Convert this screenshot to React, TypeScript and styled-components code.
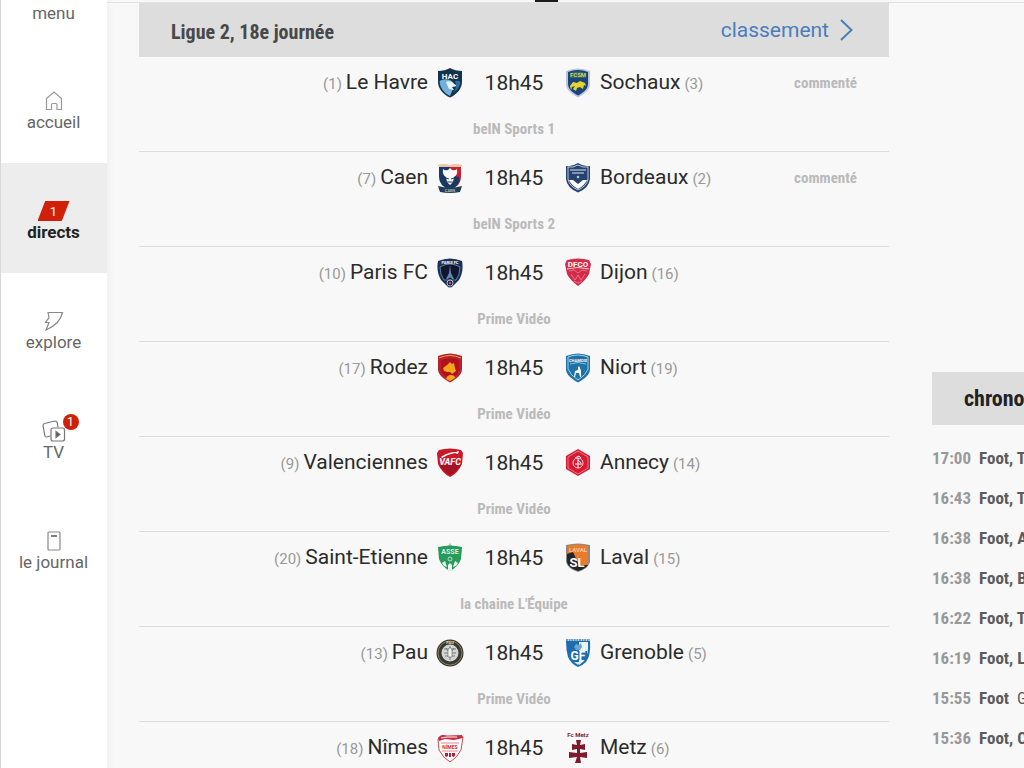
import React from 'react';
import styled, { createGlobalStyle } from 'styled-components';

const wide = `Roboto, 'Liberation Sans', sans-serif`;
const narrow = `'Roboto Condensed', 'Liberation Sans Narrow', 'Open Sans Condensed', Roboto, sans-serif`;

const GlobalStyle = createGlobalStyle`
  * { box-sizing: border-box; }
  body {
    margin: 0;
    background: #f8f8f8;
    color: #2b2b2b;
    font-family: ${wide};
    overflow: hidden;
  }
  a { color: inherit; text-decoration: none; }
  ul { margin: 0; padding: 0; list-style: none; }
  h1, h2, p { margin: 0; }
`;

const Page = styled.div`
  display: grid;
  grid-template-columns: 107px minmax(0, 1fr);
  height: 100vh;
  overflow: hidden;
`;

const Sidebar = styled.nav`
  background: #fff;
  border-left: 1px solid #d8d8d8;
  box-shadow: 0 0 8px #ececec;
`;

const NavLink = styled.a<{ $active?: boolean; $cut?: boolean }>`
  display: flex;
  flex-direction: column;
  align-items: center;
  height: ${(p) => (p.$cut ? 53 : 110)}px;
  padding-top: ${(p) => (p.$cut ? 3 : 37)}px;
  padding-right: 1px;
  background: ${(p) => (p.$active ? '#ededed' : 'transparent')};
  color: ${(p) => (p.$active ? '#222' : '#666')};
  font-size: 17px;
  font-weight: ${(p) => (p.$active ? 700 : 400)};
  line-height: 20px;
`;

const IconBox = styled.span`
  position: relative;
  display: flex;
  align-items: center;
  justify-content: center;
  height: 22px;
`;

const LiveTag = styled.span`
  display: block;
  width: 32px;
  height: 20px;
  background: #d02008;
  clip-path: polygon(24% 0, 100% 0, 76% 100%, 0 100%);
  color: #fff;
  font: 400 13px/22px ${wide};
  text-align: center;
`;

const Badge = styled.span`
  position: absolute;
  top: -6px;
  right: -13px;
  width: 16px;
  height: 16px;
  border-radius: 50%;
  background: #d02008;
  color: #fff;
  font: 400 13px/16px ${wide};
  text-align: center;
`;

const Content = styled.div`
  min-width: 0;
`;

const TopStrip = styled.div`
  height: 3px;
  padding-left: 428px;
  border-bottom: 1px solid #e2e2e2;
`;

const TopMark = styled.div`
  width: 23px;
  height: 2px;
  background: #1b1b1b;
`;

const Columns = styled.div`
  display: grid;
  grid-template-columns: minmax(0, 1fr) 92px;
  gap: 43px;
  padding-left: 32px;
`;

const SectionHeader = styled.header`
  display: flex;
  align-items: center;
  justify-content: space-between;
  height: 54px;
  padding: 0 36px 0 32px;
  background: #ddd;
`;

const SectionTitle = styled.h1`
  padding-top: 3px;
  color: #484848;
  font: 700 20px/28px ${narrow};
`;

const RankingLink = styled.a`
  display: flex;
  align-items: center;
  gap: 11px;
  color: #4a7ebb;
  font-size: 21px;
  line-height: 28px;
`;

const MatchRow = styled.li`
  height: 95px;
  padding-top: 10px;
  border-bottom: 1px solid #ddd;
`;

const MatchLine = styled.a`
  display: grid;
  grid-template-columns: minmax(0, 1fr) 172px minmax(0, 1fr);
  align-items: center;
  height: 30px;
`;

const Team = styled.span`
  display: flex;
  align-items: baseline;
  gap: 4px;
  font-size: 21px;
  line-height: 30px;
  white-space: nowrap;
`;

const HomeTeam = styled(Team)`
  justify-content: flex-end;
`;

const Rank = styled.span`
  color: #999;
  font-size: 15px;
`;

const Away = styled.span`
  display: flex;
  align-items: center;
  justify-content: space-between;
  padding-right: 32px;
`;

const Note = styled.span`
  color: #bababa;
  font: 700 15px/20px ${narrow};
`;

const Kickoff = styled.span`
  display: flex;
  align-items: center;
  justify-content: space-between;
  padding: 0 8px;
  font-size: 21px;
`;

const Channel = styled.p`
  margin-top: 22px;
  color: #bababa;
  font: 700 15px/20px ${narrow};
  text-align: center;
`;

const Chrono = styled.aside`
  min-width: 0;
  margin-top: 369px;
  overflow: hidden;
  white-space: nowrap;
`;

const ChronoTitle = styled.h2`
  padding-left: 32px;
  background: #ddd;
  color: #222;
  font: 700 22px/53px ${narrow};
`;

const ChronoList = styled.ul`
  padding-top: 13px;
`;

const ChronoLink = styled.a`
  display: flex;
  gap: 8px;
  color: #5c5c5c;
  font: 700 17px/40px ${narrow};
`;

const ChronoTime = styled.time`
  flex: 0 0 39px;
  color: #999;
`;

const Plain = styled.span`
  font-weight: 400;
`;

const CrestSvg = styled.svg`
  display: block;
  width: 28px;
  height: 30px;
  font-family: ${wide};
  font-weight: 700;
`;

const SHIELD = 'M14 0C17 2 22 3 26 3V14C26 21 20 27 14 29.500C8 27 2 21 2 14V3C6 3 11 2 14 0Z';
const ROUND = 'M2 3Q14 -2 26 3V16C26 22 20 26 14 29.500C8 26 2 22 2 16Z';

const crests: Record<string, React.ReactNode> = {
  'Le Havre': (
    <>
      <path d={SHIELD} fill="#123451" />
      <path d="M3.500 13Q8 10 14 12Q18 14 19 17L14 18L17 21L14 28C8 25 4 20 3.500 13Z" fill="#74b0d8" />
      <path d="M10 14Q15 12 18 16L22 18L16 19L18 22L13 21Z" fill="#eaf5fb" />
      <path d="M19 13Q23 12 24.500 14Q24 20 17 25Q22 19 19 13Z" fill="#2e6f9f" />
      <text x="14" y="10.500" fontSize="8" textAnchor="middle" fill="#fff">HAC</text>
    </>
  ),
  Sochaux: (
    <>
      <path d={ROUND} fill="#b9c4e4" />
      <path d="M4 4Q14 0 24 4V16C24 21 19 25 14 27.500C9 25 4 21 4 16Z" fill="#1c4478" />
      <path d="M6 5Q14 2 22 5V10H6Z" fill="#276b77" />
      <text x="14" y="9" fontSize="6" textAnchor="middle" fill="#d8d040">FCSM</text>
      <path d="M6 18L9 14L13 15L16 13L21 15L22 18L20 17L19 21L16 19L13 20L12 23L9 21L11 18L8 19L7 22Z" fill="#e4d62c" />
    </>
  ),
  Caen: (
    <>
      <path d="M2 2Q8 0 14 2Q20 0 26 2L25 5H3Z" fill="#e8c7a8" />
      <path d="M3 4H14V27Q3 23 3 14Z" fill="#193862" />
      <path d="M14 4H25V14Q25 23 14 27Z" fill="#c9202d" />
      <path d="M4 15Q14 9 24 15Q23 24 14 26Q5 24 4 15Z" fill="#193862" />
      <path d="M7 6Q9 8 12 7L14 5L16 7Q19 8 21 6Q22 12 18 14L17 19L14 22L11 19L10 14Q6 12 7 6Z" fill="#fff" />
      <path d="M10 15L13 16M18 15L15 16M11 19H17" stroke="#193862" />
      <path d="M2 23Q14 26 26 23L24 29Q14 31 4 29Z" fill="#263c55" />
      <text x="14" y="29" fontSize="4" textAnchor="middle" fill="#bbb">CAEN</text>
    </>
  ),
  Bordeaux: (
    <>
      <path d="M2 3Q8 4 14 0Q20 4 26 3V16Q25 25 14 29.500Q3 25 2 16Z" fill="#27426e" />
      <path d="M4 4Q9 5 14 2Q19 5 24 4V16Q23 23 14 27Q5 23 4 16Z" fill="none" stroke="#b9c7dc" />
      <path d="M6 7H22M8 10H20" stroke="#9fb1ca" strokeWidth="1.500" />
      <circle cx="14" cy="14" r="1.300" fill="#b9c7dc" />
      <path d="M5 17L9 17L14 21L19 17L23 17Q21 22 14 26Q7 22 5 17Z" fill="#fff" />
    </>
  ),
  'Paris FC': (
    <>
      <path d="M2 3Q14 -2 26 3Q28 13 23 22L17 28Q14 31 11 28L5 22Q0 13 2 3Z" fill="#1a3158" />
      <path d="M4 9Q14 3 24 9Q24 17 20 22H8Q4 17 4 9Z" fill="#11162f" stroke="#7798bd" strokeWidth=".8" />
      <text x="14" y="6" fontSize="4" textAnchor="middle" fill="#fff">PARIS FC</text>
      <path d="M14 7L15 15L18 21H16Q14 18 12 21H10L13 15Z" fill="#6387ad" />
      <circle cx="14" cy="25" r="3" fill="#14254a" stroke="#d7dfe9" strokeWidth=".8" />
      <path d="M13 24H15V26H13Z" fill="#df4a50" />
    </>
  ),
  Dijon: (
    <>
      <path d="M3 2Q14 -1 25 2L27 6L25 16Q22 22 14 28Q6 22 3 16L1 6Z" fill="#d42b49" />
      <text x="14" y="9" fontSize="8" textAnchor="middle" fill="#fff">DFCO</text>
      <path d="M3 11Q14 8 25 11" fill="none" stroke="#f2c9d1" />
      <path d="M5 13L10 12L14 15L18 12L23 13M7 16L11 22L14 17L17 22L21 16M10 23L14 25L18 23" fill="none" stroke="#e98598" strokeWidth=".8" />
    </>
  ),
  Rodez: (
    <>
      <path d={ROUND} fill="#b6222b" />
      <path d="M3 5Q14 0 25 5" fill="none" stroke="#e4a64a" strokeWidth="1" />
      <path d="M5 7Q14 4 23 7V17Q20 23 14 27Q8 23 5 17Z" fill="#b30f1e" />
      <path d="M7 15L11 12L14 9L16 11L18 10L19 15L20 18L16 21L14 19L11 19L8 18ZM10 26Q11 22 15 22Q19 22 19 25L14 28Z" fill="#f5a51b" />
    </>
  ),
  Niort: (
    <>
      <path d={ROUND} fill="#1d72a8" />
      <path d="M4 4Q14 0 24 4V16Q22 22 14 27Q6 22 4 16Z" fill="none" stroke="#a5cfe6" />
      <text x="14" y="9" fontSize="4" textAnchor="middle" fill="#fff">CHAMOIS</text>
      <path d="M6 11Q14 8 22 11" fill="none" stroke="#8bbdde" />
      <path d="M15 13L16 15L17 18L17 24H16L15 20H12L11 24H10L11 18L14 17L14 14Z" fill="#fff" />
    </>
  ),
  Valenciennes: (
    <>
      <path d="M3 2Q14 -1 25 2L27 5L26 16Q22 25 14 29Q6 25 2 16L1 5Z" fill="#ca1828" />
      <path d="M5 9Q12 4 20 4L23 3L22 6L19 5Q12 6 6 10Z" fill="#fff" />
      <path d="M3 17Q14 14 25 17Q21 24 14 27Q7 23 3 17Z" fill="#a51322" />
      <text x="14" y="17" fontSize="9" fontStyle="italic" textAnchor="middle" fill="#fff">VAFC</text>
    </>
  ),
  Annecy: (
    <>
      <path d="M14 1L26 8V21L14 28L2 21V8Z" fill="#d71931" />
      <path d="M14 3L24 9V20L14 26L4 20V9Z" fill="none" stroke="#f0919d" strokeWidth=".8" />
      <circle cx="14" cy="15" r="5" fill="none" stroke="#f8ccd1" />
      <path d="M11 10L15 8L17 10M14 10V20M11 16H18M14 12L17 15" fill="none" stroke="#fff" />
    </>
  ),
  'Saint-Etienne': (
    <>
      <path d="M14 0L17 4H11Z" fill="#b8c5bd" />
      <path d="M2 4Q14 1 26 4L25 16Q22 24 14 28Q6 24 3 16Z" fill="#279b5c" />
      <text x="14" y="11" fontSize="7" textAnchor="middle" fill="#d9efe1">ASSE</text>
      <circle cx="14" cy="16" r="2" fill="none" stroke="#b9e0c9" />
      <path d="M6 20L9 18L11 24L8 23ZM12 22L14 20L16 22V27L14 28L12 27ZM19 18L22 20L20 23L17 24Z" fill="#e8f4ec" />
    </>
  ),
  Laval: (
    <>
      <path d="M2 2Q14 -1 26 2V19Q24 26 14 29Q4 26 2 19Z" fill="#8f8a86" />
      <path d="M4 3Q14 0 24 3V19Q22 24 14 27Q6 24 4 19Z" fill="#eb7b2c" />
      <path d="M3 11L9 9L14 20V28Q4 25 3 19Z" fill="#242424" />
      <path d="M14 22H24Q21 26 14 28Z" fill="#242424" />
      <text x="14" y="9" fontSize="6" textAnchor="middle" fill="#f9c9a5">LAVAL</text>
      <text x="13" y="24" fontSize="13" textAnchor="middle" fill="#fff">SL</text>
    </>
  ),
  Pau: (
    <>
      <circle cx="14" cy="15" r="13.500" fill="#393a32" />
      <circle cx="14" cy="15" r="12" fill="none" stroke="#8a8158" strokeWidth="1" />
      <circle cx="14" cy="15" r="8.500" fill="#d5d6d4" />
      <text x="14" y="6" fontSize="4" textAnchor="middle" fill="#e5dfb9">PAU</text>
      <path d="M8 11H20M9 18H19M14 8V22M10 10Q14 18 18 10M8 15H20" fill="none" stroke="#777a78" />
      <path d="M12 12L14 9L16 12V19H12Z" fill="#f1f1f0" stroke="#676967" strokeWidth=".6" />
    </>
  ),
  Grenoble: (
    <>
      <path d="M2 3H26Q27 18 22 24Q18 28 14 29Q7 26 4 19Q2 12 2 3Z" fill="#1d6cae" />
      <path d="M14 4H24Q25 16 20 23L15 27V4Z" fill="#edf4f9" />
      <path d="M10 9L12 6L15 7L17 5L18 9L16 12L12 12Z" fill="#6ba6d0" />
      <path d="M2 2H26" stroke="#3f78a5" strokeWidth="1.500" strokeDasharray="2 .6" />
      <path d="M14 13H23V22H14Z" fill="#1d6cae" />
      <text x="14" y="22" fontSize="12" textAnchor="middle" fill="#fff">GF</text>
      <path d="M10 24H17L14 27Z" fill="#d9e9f4" />
    </>
  ),
  'Nîmes': (
    <>
      <path d="M2 6L5 3H23L27 4L25 17Q21 25 14 29Q7 25 3 17Z" fill="#fff" stroke="#c94a56" />
      <path d="M2 5Q5 0 11 3L26 2L27 5L18 7L9 6L3 8Z" fill="#c82d3d" />
      <path d="M5 5L11 4L21 4" fill="none" stroke="#fff" />
      <path d="M5 10H23M6 18H22" stroke="#d46b76" strokeWidth=".8" />
      <text x="14" y="16" fontSize="5" textAnchor="middle" fill="#c82d3d">NÎMES</text>
      <path d="M9 20H12V23L10.500 24L9 23ZM13 20H15V24H13ZM16 20H19V23L17.500 24L16 23Z" fill="#b71d34" />
    </>
  ),
  Metz: (
    <>
      <text x="14" y="4" fontSize="6" textAnchor="middle" fill="#7d2430">Fc Metz</text>
      <path d="M12 7H17L16 12L21 11V17L16 16V20L23 19V25L16 24L17 30H11L13 24L5 25V19L13 20V16L8 17V11L13 12Z" fill="#7c1b2a" />
    </>
  ),
};

const Crest = ({ team }: { team: string }) => (
  <CrestSvg viewBox="0 0 28 30" aria-hidden="true">{crests[team]}</CrestSvg>
);

const HomeIcon = () => (
  <svg width="18" height="20" viewBox="0 0 18 20" fill="none" stroke="#999" strokeWidth="1.200">
    <path d="M1.500 7.500L9 1L16.500 7.500V18.500H12V13.500Q12 12.500 11 12.500H7.500Q6.500 12.500 6.500 13.500V18.500H1.500Z" />
  </svg>
);

const ExploreIcon = () => (
  <svg width="20" height="20" viewBox="0 0 20 20" fill="none" stroke="#888" strokeWidth="1.200">
    <path d="M4 1.500H18.500Q16 13 2 19L5 11.500H1.500L5 6.500Z" />
  </svg>
);

const TvIcon = () => (
  <svg width="24" height="22" viewBox="0 0 24 22" fill="none" stroke="#777" strokeWidth="1.200">
    <path d="M8.500 16L4.500 17Q3 17 2.800 15.500L1 5.500Q1 4 2.500 3.500L13 1Q14.800 1 15.200 2.500L16 7.500" />
    <rect x="9" y="8" width="13.500" height="13" rx="2" />
    <path d="M14 11.500L18 14.500L14 17.500Z" fill="#555" />
  </svg>
);

const JournalIcon = () => (
  <svg width="14" height="20" viewBox="0 0 14 20" fill="none" stroke="#888" strokeWidth="1.200">
    <rect x="1" y="1" width="12" height="18" rx="1" />
    <path d="M4 5H10" stroke="#555" strokeWidth="1.500" />
  </svg>
);

const Chevron = () => (
  <svg width="13" height="22" viewBox="0 0 13 22" fill="none" stroke="#4a7ebb" strokeWidth="2">
    <path d="M1 1L11.500 11L1 21" />
  </svg>
);

const matches = [
  { home: 'Le Havre', homeRank: 1, away: 'Sochaux', awayRank: 3, channel: 'beIN Sports 1', note: 'commenté' },
  { home: 'Caen', homeRank: 7, away: 'Bordeaux', awayRank: 2, channel: 'beIN Sports 2', note: 'commenté' },
  { home: 'Paris FC', homeRank: 10, away: 'Dijon', awayRank: 16, channel: 'Prime Vidéo' },
  { home: 'Rodez', homeRank: 17, away: 'Niort', awayRank: 19, channel: 'Prime Vidéo' },
  { home: 'Valenciennes', homeRank: 9, away: 'Annecy', awayRank: 14, channel: 'Prime Vidéo' },
  { home: 'Saint-Etienne', homeRank: 20, away: 'Laval', awayRank: 15, channel: "la chaine L'Équipe" },
  { home: 'Pau', homeRank: 13, away: 'Grenoble', awayRank: 5, channel: 'Prime Vidéo' },
  { home: 'Nîmes', homeRank: 18, away: 'Metz', awayRank: 6, channel: '' },
];

const news: { time: string; topic: string; text?: string }[] = [
  { time: '17:00', topic: 'Foot, Tr' },
  { time: '16:43', topic: 'Foot, Tr' },
  { time: '16:38', topic: 'Foot, A' },
  { time: '16:38', topic: 'Foot, B' },
  { time: '16:22', topic: 'Foot, Tr' },
  { time: '16:19', topic: 'Foot, L' },
  { time: '15:55', topic: 'Foot', text: 'G' },
  { time: '15:36', topic: 'Foot, C' },
];

export default function App() {
  return (
    <>
      <GlobalStyle />
      <Page>
        <Sidebar>
          <NavLink href="#menu" $cut>menu</NavLink>
          <NavLink href="#accueil"><IconBox><HomeIcon /></IconBox>accueil</NavLink>
          <NavLink href="#directs" $active><IconBox><LiveTag>1</LiveTag></IconBox>directs</NavLink>
          <NavLink href="#explore"><IconBox><ExploreIcon /></IconBox>explore</NavLink>
          <NavLink href="#tv"><IconBox><TvIcon /><Badge>1</Badge></IconBox>TV</NavLink>
          <NavLink href="#journal"><IconBox><JournalIcon /></IconBox>le journal</NavLink>
        </Sidebar>
        <Content>
          <TopStrip><TopMark /></TopStrip>
          <Columns>
            <main>
              <SectionHeader>
                <SectionTitle>Ligue 2, 18e journée</SectionTitle>
                <RankingLink href="#classement">classement<Chevron /></RankingLink>
              </SectionHeader>
              <ul>
                {matches.map((m) => (
                  <MatchRow key={m.home}>
                    <MatchLine href="#match">
                      <HomeTeam><Rank>({m.homeRank})</Rank>{m.home}</HomeTeam>
                      <Kickoff><Crest team={m.home} />18h45<Crest team={m.away} /></Kickoff>
                      <Away>
                        <Team>{m.away}<Rank>({m.awayRank})</Rank></Team>
                        {m.note && <Note>{m.note}</Note>}
                      </Away>
                    </MatchLine>
                    <Channel>{m.channel}</Channel>
                  </MatchRow>
                ))}
              </ul>
            </main>
            <Chrono>
              <ChronoTitle>chrono</ChronoTitle>
              <ChronoList>
                {news.map((n, i) => (
                  <li key={i}>
                    <ChronoLink href="#news">
                      <ChronoTime>{n.time}</ChronoTime>
                      <span>{n.topic}</span>
                      {n.text && <Plain>{n.text}</Plain>}
                    </ChronoLink>
                  </li>
                ))}
              </ChronoList>
            </Chrono>
          </Columns>
        </Content>
      </Page>
    </>
  );
}
